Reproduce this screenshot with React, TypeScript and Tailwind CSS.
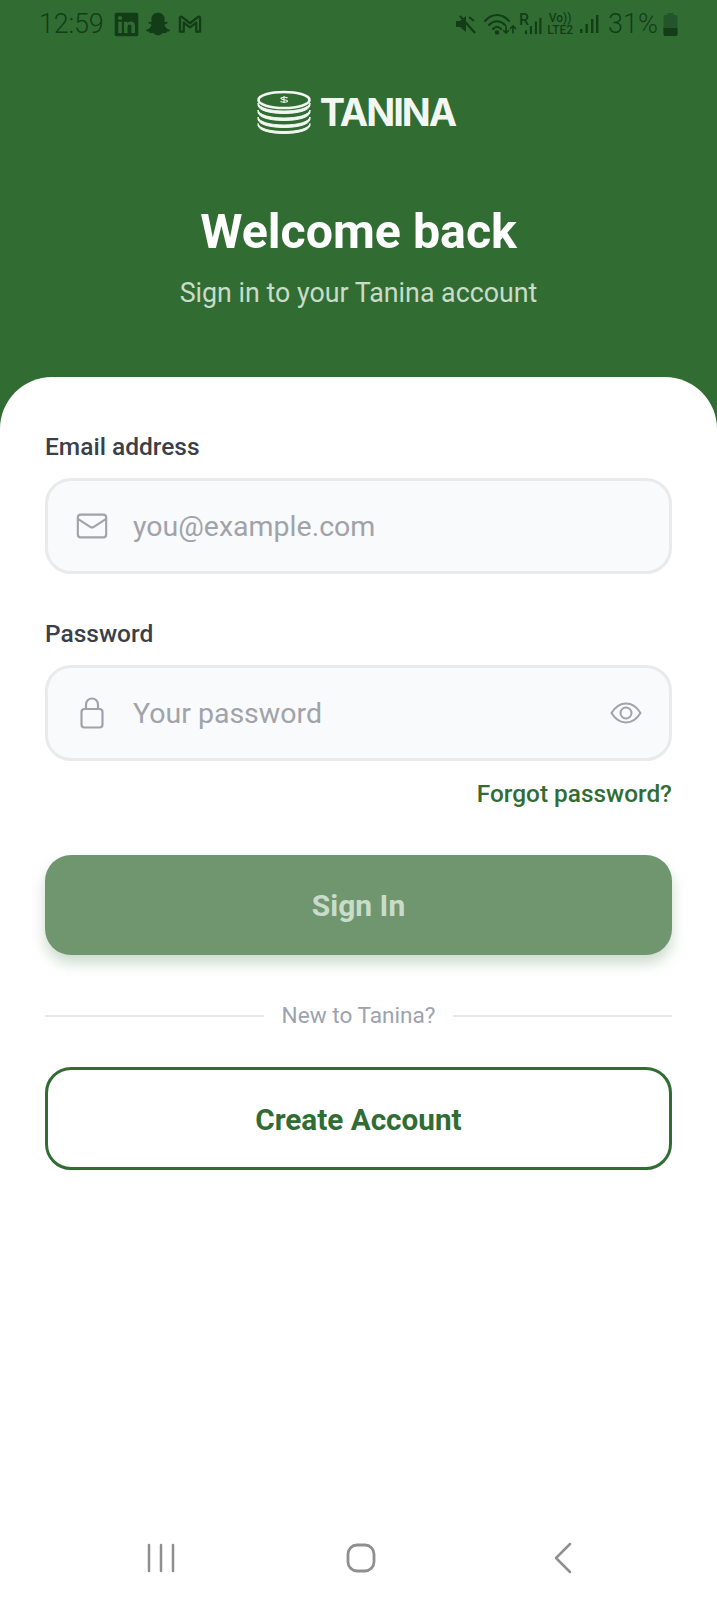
import React from 'react';
import { FaLinkedin, FaSnapchatGhost } from 'react-icons/fa';
import { Mail } from 'lucide-react';

const statusColor = '#123d17';

const GmailIcon = () => (
    <svg width="24" height="20" viewBox="0 0 25 20" fill="none" stroke={statusColor} strokeWidth="2.4" strokeLinejoin="round">
        <path d="M2 18V3.5c0-1 1-1.5 2-.9l8.5 6.6L21 2.6c1-.6 2-.1 2 .9V18h-4V8.5l-6.5 5-6.500-5V18z" />
    </svg>
);

const MuteIcon = () => (
    <svg width="22" height="22" viewBox="0 0 22 22">
        <path d="M1 8h4l6-5v16l-6-5H1z" fill={statusColor} />
        <path d="M5 3l15 17" stroke={statusColor} strokeWidth="2.2" />
        <path d="M14 4l5 4" stroke={statusColor} strokeWidth="2" />
    </svg>
);

const WifiIcon = () => (
    <svg width="32" height="24" viewBox="0 0 32 24" fill="none" stroke={statusColor} strokeWidth="2" strokeLinecap="round">
        <path d="M1 9c7-8 17-8 24 0" />
        <path d="M5 13c5-5 11-5 16 0" />
        <path d="M9 17c3-3 5-3 8 0" />
        <circle cx="13" cy="20.500" r="1.300" fill={statusColor} />
        <path d="M22 14v7M19.500 18.500l2.500 2.500 2.500-2.500" strokeWidth="1.600" />
        <path d="M29 21v-7M26.500 16.500l2.500-2.500 2.500 2.500" strokeWidth="1.600" />
    </svg>
);

const SignalBars = ({ width = 20 }: { width?: number }) => (
    <svg width={width} height="20" viewBox="0 0 20 20" fill={statusColor}>
        <rect x="1" y="15" width="2.400" height="4" />
        <rect x="6.500" y="10" width="2.400" height="9" />
        <rect x="12" y="5" width="2.400" height="14" />
        <rect x="17" y="1" width="2.400" height="18" />
    </svg>
);

const BatteryIcon = () => (
    <svg width="15" height="23" viewBox="0 0 15 23">
        <rect x="4.500" y="0" width="6" height="3" fill="#24552a" />
        <rect x="0.500" y="2" width="14" height="21" rx="2" fill="#24552a" />
        <path d="M0.500 15h14v6a2 2 0 0 1-2 2h-10a2 2 0 0 1-2-2z" fill={statusColor} />
    </svg>
);

const LockIcon = () => (
    <svg width="24" height="32" viewBox="0 0 24 32" fill="none" stroke="currentColor" strokeWidth="2.200" strokeLinecap="round" strokeLinejoin="round">
        <rect x="1.500" y="12" width="21" height="18.500" rx="3" />
        <path d="M6 12V7.500a6 6 0 0 1 12 0V12" />
    </svg>
);

const EyeIcon = () => (
    <svg width="32" height="22" viewBox="0 0 32 22" fill="none" stroke="#a0a3a9" strokeWidth="2">
        <path d="M1.500 11C5.500 4.500 10.500 1.500 16 1.500S26.500 4.500 30.500 11C26.500 17.500 21.500 20.500 16 20.500S5.500 17.500 1.500 11z" />
        <circle cx="16" cy="11" r="5.500" />
    </svg>
);

const CoinsLogo = () => (
    <svg width="56" height="44" viewBox="0 0 56 44" fill="none" stroke="#f3f7f2">
        <ellipse cx="28" cy="10" rx="25.500" ry="8" strokeWidth="2.600" />
        <path d="M2 13c1 5 12 8 26 8s25-3 26-8v2.500c-1 5-12 8-26 8S3 20.500 2 15.500z" fill="#f3f7f2" strokeWidth="1" />
        <path d="M2 20c1 5 12 8 26 8s25-3 26-8v2.500c-1 5-12 8-26 8S3 27.500 2 22.500z" fill="#f3f7f2" strokeWidth="1" />
        <path d="M2 27c1 5 12 8 26 8s25-3 26-8v2.500c-1 5-12 8-26 8S3 34.500 2 29.500z" fill="#f3f7f2" strokeWidth="1" />
        <path d="M2 33.500c1 5 12 8 26 8s25-3 26-8v2c-1 5-12 8-26 8S3 40.500 2 35.500z" fill="#f3f7f2" strokeWidth="1" />
        <path d="M31.500 8c-1-1-6.500-1-6.500 .6s6.500 .8 6.500 2.400-5.500 1.500-7 .5M28 6v7" strokeWidth="1.100" />
    </svg>
);

const StatusBar = () => (
    <div className="flex items-center justify-between pl-[39px] pr-[39px] pt-[10px] h-[38px]">
        <div className="flex items-center gap-[6px]">
            <span className="text-[27px] leading-none font-light tracking-[-0.2px] mr-[3px]" style={{ color: statusColor }}>12:59</span>
            <FaLinkedin size={27} color={statusColor} />
            <FaSnapchatGhost size={24} color={statusColor} />
            <span className="ml-[2px] flex"><GmailIcon /></span>
        </div>
        <div className="flex items-center">
            <MuteIcon />
            <span className="ml-[7px] flex"><WifiIcon /></span>
            <div className="flex items-end ml-[3px]">
                <span className="text-[16px] leading-none font-medium mb-[8px] mr-[-5px]" style={{ color: statusColor }}>R</span>
                <SignalBars width={18} />
            </div>
            <div className="flex flex-col items-center text-[12px] leading-[12px] font-medium ml-[5px]" style={{ color: statusColor }}>
                <span>Vo))</span>
                <span>LTE2</span>
            </div>
            <span className="ml-[6px] flex"><SignalBars /></span>
            <span className="ml-[9px] text-[27px] leading-none font-light" style={{ color: statusColor }}>31%</span>
            <span className="ml-[5px] flex"><BatteryIcon /></span>
        </div>
    </div>
);

const Field = ({ label, placeholder, icon, trailing }: { label: string; placeholder: string; icon: React.ReactNode; trailing?: React.ReactNode }) => (
    <div>
        <label className="block text-[24.500px] leading-[30px] font-medium text-[#3a3f4a] mb-[16px]">{label}</label>
        <div className="h-[96px] rounded-[26px] border-[3px] border-[#e8eaec] bg-[#f9fafb] flex items-center pl-[27px] pr-[27px]">
            <span className="w-[34px] flex justify-center text-[#a0a3a9]">{icon}</span>
            <span className="ml-[24px] pt-[3px] flex-1 text-[28.500px] text-[#a0a3a9]">{placeholder}</span>
            {trailing}
        </div>
    </div>
);

const App: React.FC = () => {
    return (
        <div className="h-[1600px] bg-[#316d33] flex flex-col overflow-hidden" style={{ fontFamily: 'Roboto, sans-serif' }}>
            <StatusBar />

            {/* Header */}
            <div className="h-[339px] flex flex-col items-center pt-[52px]">
                <div className="flex items-center gap-[8px] mr-[6px]">
                    <CoinsLogo />
                    <span className="text-[38px] leading-[44px] font-bold text-[#f3f7f2] tracking-[-2px]" style={{ fontFamily: 'Inter, sans-serif' }}>TANINA</span>
                </div>
                <h1 className="mt-[68px] text-[48.300px] leading-[60px] font-bold text-white">Welcome back</h1>
                <p className="mt-[14px] text-[26.800px] leading-[34px] text-[#c9dcc9]">Sign in to your Tanina account</p>
            </div>

            {/* Form card */}
            <div className="flex-1 bg-white rounded-t-[52px] px-[45px] pt-[55px] flex flex-col">
                <Field label="Email address" placeholder="you@example.com" icon={<Mail size={34} strokeWidth={1.500} />} />
                <div className="mt-[45px]">
                    <Field
                        label="Password"
                        placeholder="Your password"
                        icon={<LockIcon />}
                        trailing={<EyeIcon />}
                    />
                </div>
                <div className="mt-[18px] flex justify-end">
                    <span className="text-[24.400px] leading-[30px] font-medium text-[#316d33]">Forgot password?</span>
                </div>

                <button className="mt-[46px] h-[100px] rounded-[26px] bg-[#6f966f] text-[#c9dcc9] text-[30px] font-bold shadow-[0_8px_14px_rgba(49,109,51,0.25)]">
                    Sign In
                </button>

                <div className="mt-[46px] flex items-center gap-[18px]">
                    <div className="flex-1 h-[2px] bg-[#e5e7eb]" />
                    <span className="text-[22.600px] leading-[30px] text-[#9ca3af]">New to Tanina?</span>
                    <div className="flex-1 h-[2px] bg-[#e5e7eb]" />
                </div>

                <button className="mt-[36px] h-[103px] pt-[3px] rounded-[26px] border-[3px] border-[#316d33] bg-white text-[#316d33] text-[29.700px] font-bold">
                    Create Account
                </button>

                {/* Nav bar */}
                <div className="mt-auto mb-[26px] flex items-center justify-between pl-[101px] pr-[99px]">
                    <svg width="30" height="30" viewBox="0 0 30 30" stroke="#8f8f8f" strokeWidth="2.500" strokeLinecap="round">
                        <path d="M3 2v26M15 2v26M27 2v26" />
                    </svg>
                    <svg width="30" height="30" viewBox="0 0 30 30" fill="none" stroke="#8f8f8f" strokeWidth="2.800" className="mr-[8px]">
                        <rect x="2" y="2" width="26" height="26" rx="9" />
                    </svg>
                    <svg width="20" height="32" viewBox="0 0 20 32" fill="none" stroke="#8f8f8f" strokeWidth="2.500" strokeLinecap="round" strokeLinejoin="round">
                        <path d="M17 2L3 16l14 14" />
                    </svg>
                </div>
            </div>
        </div>
    );
};

export default App;
